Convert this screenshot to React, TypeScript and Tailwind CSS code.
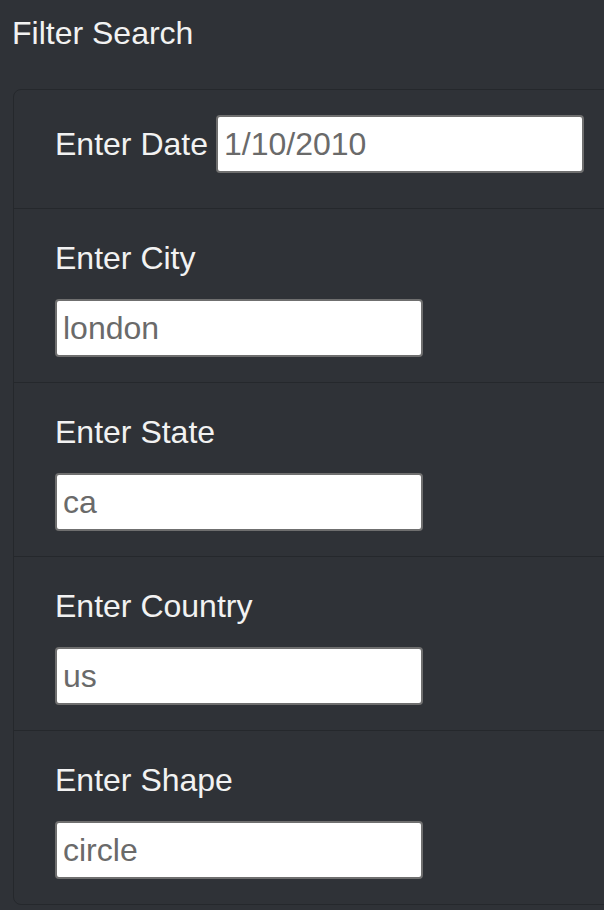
import React from 'react';

const fields = [
  { label: 'Enter City', value: 'london' },
  { label: 'Enter State', value: 'ca' },
  { label: 'Enter Country', value: 'us' },
  { label: 'Enter Shape', value: 'circle' },
];

const inputCls =
  'h-[58px] w-[368px] rounded-[4px] border-2 border-[#6f6f6f] bg-white px-[6px] text-[32px] leading-none text-[#6a6a6a] outline-none';

export default function App() {
  return (
    <div className="min-h-[910px] w-[604px] overflow-hidden bg-[#2f3237] font-['Liberation_Sans',Arial,sans-serif] text-[#f2f2f2]">
      <h5 className="pl-[12px] pt-[12px] text-[32px] leading-[42px]">Filter Search</h5>
      <ul className="ml-[13px] mt-[35px] w-[620px] rounded-[8px] border border-[#25282c]">
        <li className="flex items-center border-b border-[#25282c] pl-[41px] pb-[35px] pt-[25px]">
          <label className="mr-[8px] text-[32px] leading-[48px]">Enter Date</label>
          <input className={inputCls} defaultValue="1/10/2010" />
        </li>
        {fields.map((f, i) => (
          <li
            key={f.label}
            className={`flex flex-col items-start pl-[41px] pt-[25px] pb-[25px] ${
              i < fields.length - 1 ? 'border-b border-[#25282c]' : ''
            }`}
          >
            <label className="text-[32px] leading-[48px]">{f.label}</label>
            <input className={`mt-[17px] ${inputCls}`} defaultValue={f.value} />
          </li>
        ))}
      </ul>
    </div>
  );
}
